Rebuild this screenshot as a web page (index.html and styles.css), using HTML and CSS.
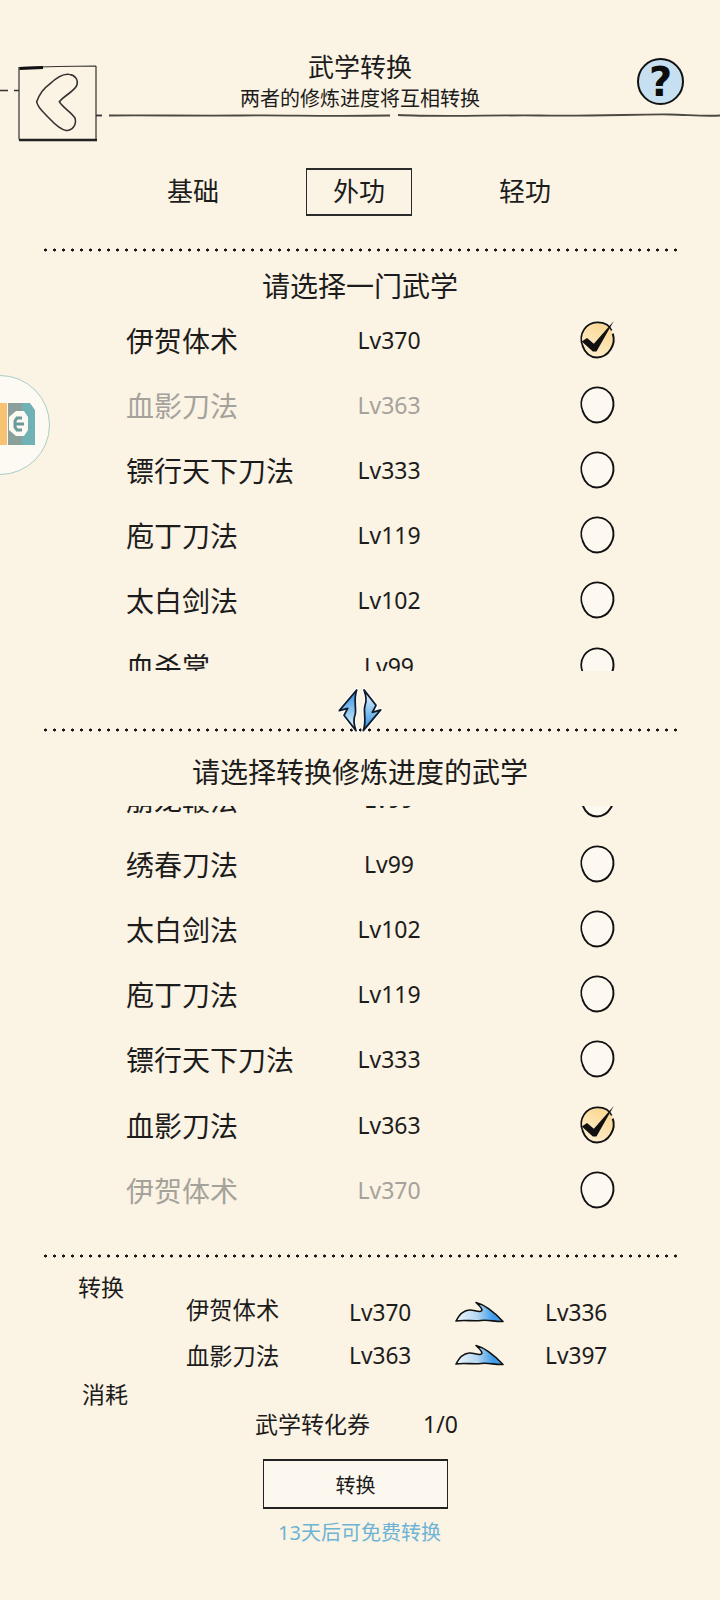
FILE: index.html
```html
<!DOCTYPE html>
<html lang="zh-CN">
<head>
    <meta charset="UTF-8">
    <meta name="viewport" content="width=device-width, initial-scale=1.0">
    <title>武学转换</title>
    <link rel="stylesheet" href="styles.css">
</head>
<body>
    <svg class="defs" width="0" height="0">
        <defs>
            <linearGradient id="checkFill" x1="0.8" y1="0" x2="0.2" y2="1">
                <stop offset="0" stop-color="#fbd68c"/>
                <stop offset="1" stop-color="#fdf0d4"/>
            </linearGradient>
            <linearGradient id="boltFill" x1="0" y1="0" x2="0" y2="1">
                <stop offset="0" stop-color="#2b8be0"/>
                <stop offset="0.6" stop-color="#9fd0f4"/>
                <stop offset="1" stop-color="#f4fafd"/>
            </linearGradient>
            <linearGradient id="waveFill" x1="0" y1="0" x2="1" y2="0">
                <stop offset="0" stop-color="#eef6fb"/>
                <stop offset="0.45" stop-color="#b5d8f2"/>
                <stop offset="0.8" stop-color="#3d9bea"/>
                <stop offset="1" stop-color="#4ba4ec"/>
            </linearGradient>
            <symbol id="radioOff" viewBox="0 0 40 40">
                <circle cx="20" cy="20" r="16.6" fill="#fdf9f1"/>
                <path d="M6.5 26C1.5 14 10 3 20.5 3.2C27 3.3 32 7 34.8 13" fill="none" stroke="#111" stroke-width="1.6"/>
                <path d="M34.6 12.5C38.5 24 31 36.6 20 36.6C13 36.6 8.5 32 6.2 25.5" fill="none" stroke="#111" stroke-width="1.9"/>
            </symbol>
            <symbol id="radioOn" viewBox="0 0 40 40">
                <circle cx="20" cy="20" r="16" fill="url(#checkFill)"/>
                <path d="M6.5 26C1.5 14 10 3 20.5 3.2C27 3.3 32 6 34 11" fill="none" stroke="#111" stroke-width="1.6"/>
                <path d="M35 14C38.5 24 31 36.6 20 36.6C13 36.6 8.5 32 6.2 25.5" fill="none" stroke="#111" stroke-width="1.9"/>
                <path d="M5.5 21.5L10.5 18L17 23.5L36 2L19.5 31L16 31Z" fill="#111"/>
            </symbol>
            <symbol id="wave" viewBox="0 0 50 22">
                <path d="M1 20C4 14 9 9.5 14 9C18 8.5 22 11 25 10.5C28 10 28 8 21 1.5C31 4 40 12 48 20.5C40 21 34 18.5 26 19.5C18 20.5 9 18.5 1 20Z" fill="url(#waveFill)" stroke="#111" stroke-width="1.6" stroke-linejoin="round"/>
            </symbol>
            <path id="bolt" d="M18.7 4L1.3 24.7L9.7 22.3L6 29.3L18 44.7C15.5 38 15 34 17 29C19 24 15 14 18.7 4Z"/>
        </defs>
    </svg>

    <div class="page">
        <div class="float-logo">
            <svg width="50" height="100" viewBox="0 0 50 100">
                <path d="M0 28H7V70H0Z" fill="#f7c272"/>
                <path d="M8 28H22V70H8Z" fill="#8b9f9b"/>
                <path d="M22 28H30L35 35V70H22Z" fill="#6fb1b5"/>
                <path d="M9 42L16 36H24L28 42V55L24 61H16L9 55Z" fill="#fdfaf3"/>
                <path d="M22 43H17L15 46V52L17 55H22M16 49H24" fill="none" stroke="#6f9a9c" stroke-width="3"/>
            </svg>
        </div>

        <header class="header">
            <svg class="header-line" width="720" height="60" viewBox="0 0 720 60">
                <path d="M0 25.5H8M14 25.5H19" fill="none" stroke="#333" stroke-width="1.5"/>
                <path d="M96 50.5H102" fill="none" stroke="#333" stroke-width="1.8"/>
                <path d="M109 50.5C150 50 190 51 240 50.5C290 49.5 310 52 390 50.5M398 50C440 52 490 50 540 50.5C590 51.5 640 49 670 49.5C690 50 705 51.5 720 50.5" fill="none" stroke="#4b4a42" stroke-width="1.8"/>
            </svg>
            <a class="back">
                <svg width="80" height="78" viewBox="0 0 80 78">
                    <path d="M1.5 2.5L40 1.5L78 1M1 2V74.5M78 1V75" fill="none" stroke="#333" stroke-width="1.2"/>
                    <path d="M1.5 3.5L25 2.5" fill="none" stroke="#111" stroke-width="3"/>
                    <path d="M1 75H79" fill="none" stroke="#222" stroke-width="2.4"/>
                    <path d="M18.7 36.7C21 30 26 23 31.3 19.3C38 13 46 8.5 51 9.3C57 10 61 15 58.5 21C55 27 46 31 41.3 36.7C44 42 53 47 57 53C59 60 54 66 48 65.5C40 64 34 56 28 50C23 45 19 41 18.7 36.7Z" fill="none" stroke="#333" stroke-width="1.6"/>
                </svg>
            </a>
            <div class="titles">
                <h1>武学转换</h1>
                <p>两者的修炼进度将互相转换</p>
            </div>
            <a class="help">?</a>
        </header>

        <nav class="tabs">
            <span class="tab">基础</span>
            <span class="tab tab-on">外功</span>
            <span class="tab">轻功</span>
        </nav>

        <div class="dots dots-first"></div>
        <h2 class="pick-title">请选择一门武学</h2>
        <ul class="list list-top">
            <li class="row"><span>伊贺体术</span><span class="lv">Lv370</span><svg class="radio"><use href="#radioOn"/></svg></li>
            <li class="row row-off"><span>血影刀法</span><span class="lv">Lv363</span><svg class="radio"><use href="#radioOff"/></svg></li>
            <li class="row"><span>镖行天下刀法</span><span class="lv">Lv333</span><svg class="radio"><use href="#radioOff"/></svg></li>
            <li class="row"><span>庖丁刀法</span><span class="lv">Lv119</span><svg class="radio"><use href="#radioOff"/></svg></li>
            <li class="row"><span>太白剑法</span><span class="lv">Lv102</span><svg class="radio"><use href="#radioOff"/></svg></li>
            <li class="row"><span>血杀掌</span><span class="lv">Lv99</span><svg class="radio"><use href="#radioOff"/></svg></li>
        </ul>

        <div class="dots dots-swap">
            <svg class="swap" width="46" height="50" viewBox="0 0 46 50">
                <g stroke="#fff" stroke-width="4" stroke-linejoin="round" fill="#fff">
                    <use href="#bolt"/>
                    <use href="#bolt" transform="rotate(180 22 24.3)"/>
                </g>
                <g stroke="#111c28" stroke-width="1.8" stroke-linejoin="round" fill="url(#boltFill)">
                    <use href="#bolt"/>
                    <use href="#bolt" transform="rotate(180 22 24.3)"/>
                </g>
            </svg>
        </div>
        <h2 class="pick-title pick-second">请选择转换修炼进度的武学</h2>
        <ul class="list list-bottom">
            <li class="row"><span>崩龙鞭法</span><span class="lv">Lv99</span><svg class="radio"><use href="#radioOff"/></svg></li>
            <li class="row"><span>绣春刀法</span><span class="lv">Lv99</span><svg class="radio"><use href="#radioOff"/></svg></li>
            <li class="row"><span>太白剑法</span><span class="lv">Lv102</span><svg class="radio"><use href="#radioOff"/></svg></li>
            <li class="row"><span>庖丁刀法</span><span class="lv">Lv119</span><svg class="radio"><use href="#radioOff"/></svg></li>
            <li class="row"><span>镖行天下刀法</span><span class="lv">Lv333</span><svg class="radio"><use href="#radioOff"/></svg></li>
            <li class="row"><span>血影刀法</span><span class="lv">Lv363</span><svg class="radio"><use href="#radioOn"/></svg></li>
            <li class="row row-off"><span>伊贺体术</span><span class="lv">Lv370</span><svg class="radio"><use href="#radioOff"/></svg></li>
        </ul>

        <div class="dots dots-last"></div>
        <section class="summary">
            <div class="label">转换</div>
            <div class="change change-one">
                <span class="change-name">伊贺体术</span>
                <span class="change-lv">Lv370</span>
                <svg class="wave"><use href="#wave"/></svg>
                <span class="change-to">Lv336</span>
            </div>
            <div class="change">
                <span class="change-name">血影刀法</span>
                <span class="change-lv">Lv363</span>
                <svg class="wave"><use href="#wave"/></svg>
                <span class="change-to">Lv397</span>
            </div>
            <div class="label label-cost">消耗</div>
            <div class="cost">
                <span>武学转化券</span>
                <span>1/0</span>
            </div>
            <button class="convert" type="button">转换</button>
            <p class="free">13天后可免费转换</p>
        </section>
    </div>
</body>
</html>
```

FILE: styles.css
```css
* {
    box-sizing: border-box;
}
body {
    margin: 0;
    background-color: #fbf3e3;
    color: #1c1c1c;
    font-family: "Noto Sans", "Noto Sans CJK SC", sans-serif;
}
.defs {
    display: block;
    height: 0;
}
.page {
    position: relative;
    width: 720px;
    height: 1600px;
    overflow: hidden;
}
.float-logo {
    position: absolute;
    left: -50px;
    top: 375px;
    width: 100px;
    height: 100px;
    padding-left: 50px;
    border: 1.5px solid #a9cdc6;
    border-radius: 50%;
    background-color: #fdfaf3;
}
.float-logo svg {
    display: block;
    margin: -1.5px 0 0 -1.5px;
}

/* header */
.header {
    position: relative;
    display: grid;
    grid-template-columns: 1fr auto 1fr;
    height: 142px;
    padding-top: 50px;
}
.header-line {
    position: absolute;
    left: 0;
    top: 65px;
}
.back {
    position: relative;
    display: block;
    width: 80px;
    height: 78px;
    margin: 15px 0 0 18px;
}
.back svg {
    display: block;
}
.titles {
    position: relative;
    text-align: center;
}
.titles h1 {
    margin: 0;
    font-size: 26px;
    font-weight: 400;
    line-height: 34px;
}
.titles p {
    margin: 2px 0 0;
    font-size: 20px;
    line-height: 26px;
}
.help {
    position: relative;
    justify-self: end;
    display: flex;
    align-items: center;
    justify-content: center;
    width: 47px;
    height: 47px;
    margin: 8px 36px 0 0;
    border: 2.5px solid #111;
    border-radius: 50%;
    background-color: #c6e0f1;
    font-family: "DejaVu Sans", sans-serif;
    font-size: 40px;
    font-weight: 700;
    line-height: 1;
    color: #0c0c0c;
}

/* tabs */
.tabs {
    display: flex;
    justify-content: center;
    gap: 60px;
    margin-top: 26px;
    padding-right: 2px;
}
.tab {
    width: 106px;
    height: 48px;
    font-size: 26px;
    line-height: 46px;
    text-align: center;
}
.tab-on {
    border-style: solid;
    border-color: #2a2a2a;
    border-width: 2px 1.5px 2.5px 1.5px;
    line-height: 42px;
}

/* dotted dividers */
.dots {
    position: relative;
    width: 638px;
    height: 4px;
    margin-left: 41px;
    background-image: radial-gradient(circle at center, #1a1a1a 1.3px, transparent 1.8px);
    background-size: 9px 4px;
    background-repeat: repeat-x;
}
.dots-first {
    margin-top: 32px;
}
.dots-swap {
    margin-top: 57px;
}
.dots-last {
    margin-top: 31px;
}
.swap {
    position: absolute;
    left: 297px;
    top: -42px;
}

/* lists */
.pick-title {
    margin: 0;
    height: 56px;
    padding-top: 12px;
    font-size: 28px;
    font-weight: 400;
    line-height: 44px;
    text-align: center;
}
.pick-second {
    height: 74px;
    padding-top: 18px;
}
.list {
    margin: 0;
    padding: 0;
    list-style: none;
    overflow: hidden;
}
.list-top {
    height: 364px;
    margin-top: -1px;
}
.list-bottom {
    height: 417px;
}
.list-bottom .row:first-child {
    margin-top: -40px;
}
.row {
    display: grid;
    grid-template-columns: 201px 124px 36px;
    align-items: center;
    height: 65.2px;
    padding-left: 126px;
    font-size: 28px;
}
.lv {
    font-size: 23px;
    text-align: center;
}
.row .radio {
    width: 42px;
    height: 42px;
    margin-left: 125px;
}
.row-off {
    color: #a5a29c;
}

/* bottom summary */
.summary {
    font-size: 23px;
}
.label {
    margin: 13px 0 0 78px;
    height: 32px;
    line-height: 32px;
}
.label-cost {
    margin: 0 0 0 82px;
}
.change {
    display: flex;
    align-items: center;
    height: 46px;
    padding-left: 186px;
    font-size: 22.7px;
}
.change-one {
    margin-top: -17px;
}
.change-one .change-lv,
.change-one .change-to,
.change-one .wave {
    margin-top: 6px;
}
.change-name {
    width: 163px;
    font-size: 23.3px;
}
.change-lv {
    width: 106px;
}
.wave {
    width: 50px;
    height: 22px;
    margin-right: 40px;
}
.cost {
    display: flex;
    gap: 53px;
    height: 30px;
    margin-top: -1px;
    padding-left: 255px;
    line-height: 30px;
}
.convert {
    display: block;
    width: 185px;
    height: 50px;
    margin: 20px 0 0 263px;
    padding: 0;
    border-style: solid;
    border-color: #222;
    border-width: 2px 1.5px 2.5px 1.5px;
    background-color: #fdf8ef;
    color: #1c1c1c;
    font-family: inherit;
    font-size: 20px;
}
.free {
    margin: 10px 0 0;
    padding-left: 278px;
    color: #6db3d6;
    font-size: 20px;
    line-height: 28px;
}
```
